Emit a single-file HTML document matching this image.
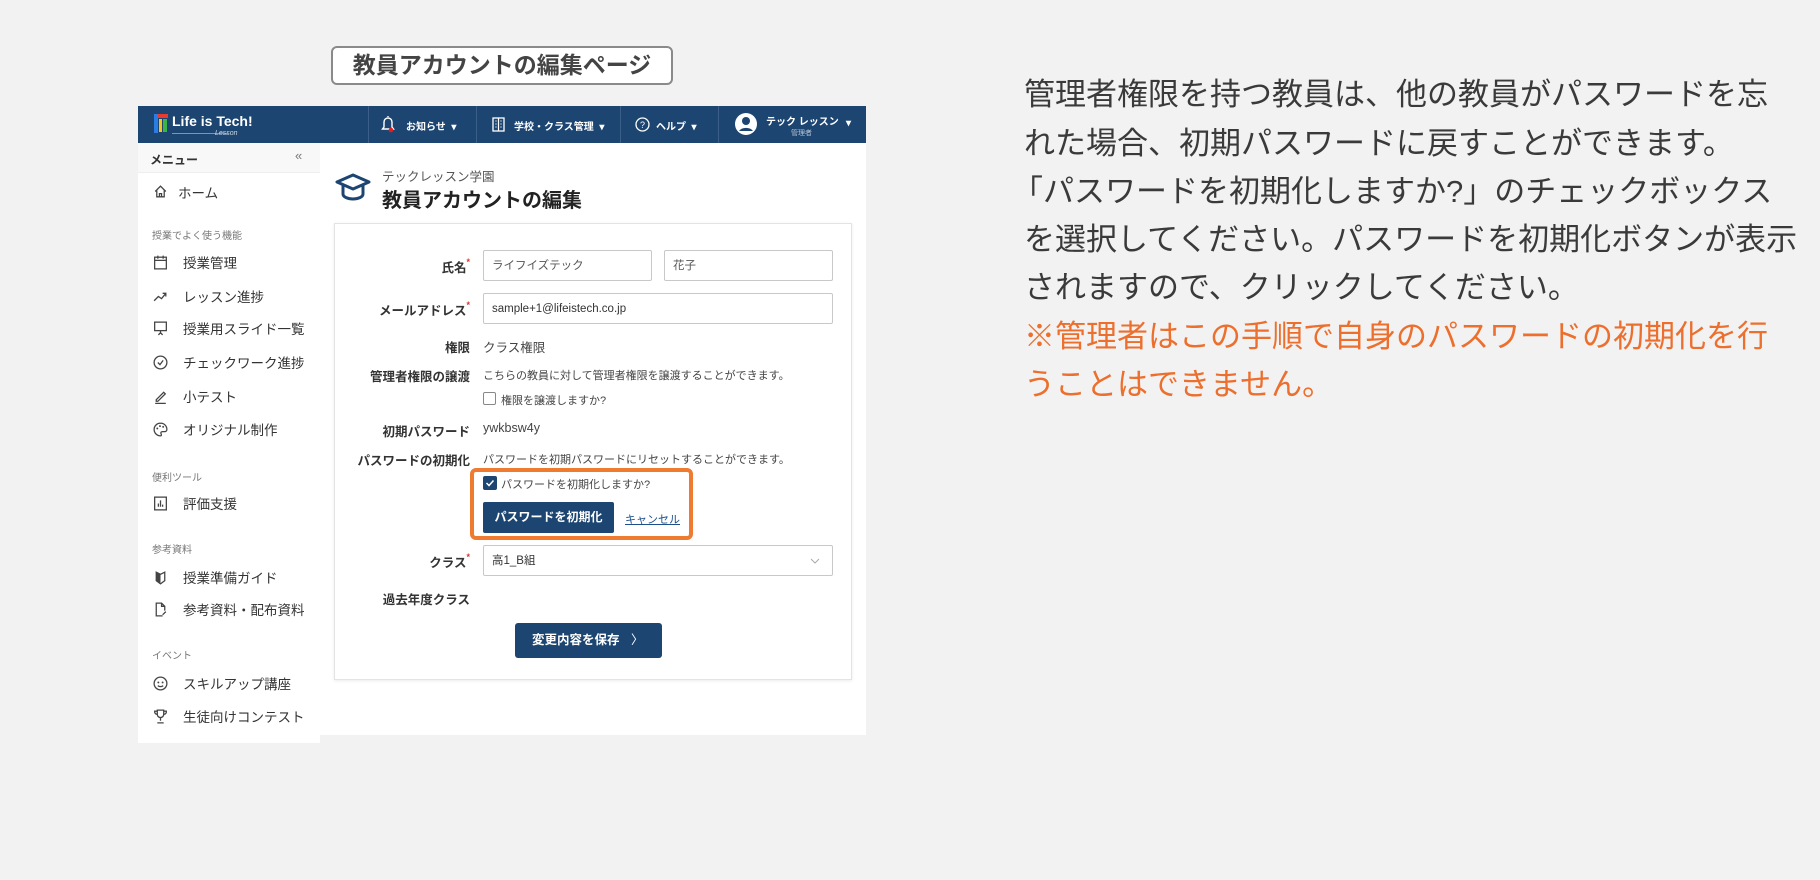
<!DOCTYPE html>
<html><head><meta charset="utf-8"><style>
*{box-sizing:border-box;margin:0;padding:0}
body{width:1820px;height:880px;background:#f2f2f2;font-family:"Liberation Sans","Noto Sans CJK JP",sans-serif;position:relative;overflow:hidden;color:#333}
.a{position:absolute;white-space:nowrap}
.title{left:331px;top:46px;width:342px;height:39px;border:2px solid #8a8a8a;border-radius:6px;background:#fff;font-size:23px;font-weight:bold;color:#444;text-align:center;line-height:35px}
.hdr{left:138px;top:106px;width:728px;height:37px;background:#1d4571}
.hdr .div{position:absolute;top:0;width:1px;height:37px;background:#3b5f88}
.ht{color:#fff;font-size:10px;font-weight:bold;position:absolute;top:12px}
.side{left:138px;top:143px;width:182px;height:600px;background:#fff}
.main{left:320px;top:143px;width:546px;height:592px;background:#fff}
.sm{font-size:13.5px;color:#333;position:absolute;left:45px}
.sec{font-size:10px;color:#777;position:absolute;left:14px}
.ic{position:absolute;left:14px;width:17px;height:17px}
.card{left:334px;top:223px;width:518px;height:457px;background:#fff;border:1px solid #e3e3e3;box-shadow:0 1px 3px rgba(0,0,0,.08)}
.lbl{font-size:12.5px;font-weight:bold;color:#333;text-align:right;width:200px;left:270px}
.req{color:#d33;font-size:9px;vertical-align:top}
.inp{border:1px solid #c8c8c8;border-radius:2px;background:#fff;font-size:11.5px;color:#555;padding-left:8px;line-height:30px;height:31px}
.tx{font-size:11px;color:#444}
.rt{left:1024px;font-size:31px;color:#3a3a3a;line-height:48px}
</style></head><body>
<div class="a title">教員アカウントの編集ページ</div>

<div class="a hdr">
  <svg style="position:absolute;left:16px;top:8px" width="14" height="19" viewBox="0 0 14 19"><rect x="0" y="0" width="4" height="19" fill="#2a7de1"/><rect x="4" y="0" width="10" height="4" fill="#e63b2e"/><rect x="5" y="5" width="3" height="13" fill="#f5c518"/><rect x="9" y="5" width="4" height="13" fill="#3cb44b"/></svg>
  <div class="a" style="left:34px;top:7px;color:#fff;font-size:14px;font-weight:bold">Life is Tech!</div>
  <div class="a" style="left:34px;top:27px;width:56px;height:1px;background:#7a95b5"></div>
  <div class="a" style="left:77px;top:24px;color:#cfd9e6;font-size:7px;font-style:italic">Lesson</div>
  <div class="div" style="left:230px"></div><div class="div" style="left:338px"></div><div class="div" style="left:482px"></div><div class="div" style="left:580px"></div>
  <svg style="position:absolute;left:243px;top:9px" width="14" height="19" viewBox="0 0 14 19"><path d="M7 1v1M3 12V7a4 4 0 0 1 8 0v5l1.5 2h-11z" fill="none" stroke="#fff" stroke-width="1.4"/><circle cx="10" cy="15" r="2.3" fill="#e02020"/></svg>
  <div class="ht" style="left:268px">お知らせ&nbsp; ▾</div>
  <svg style="position:absolute;left:354px;top:11px" width="13" height="15" viewBox="0 0 13 15"><rect x="1" y="1" width="11" height="13" fill="none" stroke="#fff" stroke-width="1.3"/><path d="M6.5 1v13M3.5 4h1M8.5 4h1M3.5 7h1M8.5 7h1M3.5 10h1M8.5 10h1" stroke="#fff" stroke-width="1.2"/></svg>
  <div class="ht" style="left:376px">学校・クラス管理&nbsp; ▾</div>
  <svg style="position:absolute;left:497px;top:11px" width="15" height="15" viewBox="0 0 15 15"><circle cx="7.5" cy="7.5" r="6.5" fill="none" stroke="#fff" stroke-width="1.3"/><text x="7.5" y="11" font-size="9" fill="#fff" text-anchor="middle" font-family="Liberation Sans">?</text></svg>
  <div class="ht" style="left:518px">ヘルプ&nbsp; ▾</div>
  <svg style="position:absolute;left:596px;top:6px" width="24" height="24" viewBox="0 0 24 24"><circle cx="12" cy="12" r="11" fill="#fff"/><circle cx="12" cy="9" r="4" fill="#1d4571"/><path d="M5 19a8 6 0 0 1 14 0" fill="#1d4571"/></svg>
  <div class="ht" style="left:628px;top:7px">テック レッスン</div>
  <div class="a" style="left:653px;top:22px;color:#b8c6d8;font-size:7px">管理者</div>
  <div class="ht" style="left:708px;top:12px">▾</div>
</div>

<div class="a side">
  <div style="position:absolute;left:0;top:0;width:182px;height:30px;background:#f8f8f8;border-bottom:1px solid #eee"></div>
  <div class="a" style="left:12px;top:8px;font-size:12px;font-weight:bold">メニュー</div>
  <div class="a" style="left:157px;top:5px;font-size:13px;color:#777">«</div>
  <svg class="ic" style="top:40px" viewBox="0 0 16 16"><path d="M3 8l5-5 5 5M4.5 7v6h7V7M7 13v-3h2v3" fill="none" stroke="#444" stroke-width="1.2"/></svg>
  <div class="sm" style="top:39px;left:40px">ホーム</div>
  <div class="sec" style="top:84px">授業でよく使う機能</div>
  <svg class="ic" style="top:111px" viewBox="0 0 16 16"><rect x="2.5" y="3" width="11" height="11" fill="none" stroke="#444" stroke-width="1.2"/><path d="M2.5 6h11M5.5 1.5v3M10.5 1.5v3" stroke="#444" stroke-width="1.2"/></svg>
  <div class="sm" style="top:109px">授業管理</div>
  <svg class="ic" style="top:145px" viewBox="0 0 16 16"><path d="M2 12l4-4 3 2 4-5M10 5h3v3" fill="none" stroke="#444" stroke-width="1.2"/></svg>
  <div class="sm" style="top:143px">レッスン進捗</div>
  <svg class="ic" style="top:177px" viewBox="0 0 16 16"><rect x="2.5" y="2" width="11" height="8" fill="none" stroke="#444" stroke-width="1.2"/><path d="M8 10v3M6 14l2-2 2 2" fill="none" stroke="#444" stroke-width="1.2"/></svg>
  <div class="sm" style="top:175px">授業用スライド一覧</div>
  <svg class="ic" style="top:211px" viewBox="0 0 16 16"><circle cx="8" cy="8" r="6" fill="none" stroke="#444" stroke-width="1.2"/><path d="M5.5 8l2 2 3-4" fill="none" stroke="#444" stroke-width="1.2"/></svg>
  <div class="sm" style="top:209px">チェックワーク進捗</div>
  <svg class="ic" style="top:245px" viewBox="0 0 16 16"><path d="M4 11l7-7 1.5 1.5-7 7H4zM3 14.5h10" fill="none" stroke="#444" stroke-width="1.2"/></svg>
  <div class="sm" style="top:243px">小テスト</div>
  <svg class="ic" style="top:278px" viewBox="0 0 16 16"><path d="M8 2a6 6 0 1 0 0 12c1 0 1-1 .5-2s0-2 1.5-2h2a2 2 0 0 0 2-2C14 4.5 11.3 2 8 2z" fill="none" stroke="#444" stroke-width="1.2"/><circle cx="5" cy="7" r=".9" fill="#444"/><circle cx="7.5" cy="4.8" r=".9" fill="#444"/><circle cx="10.5" cy="5.5" r=".9" fill="#444"/></svg>
  <div class="sm" style="top:276px">オリジナル制作</div>
  <div class="sec" style="top:326px">便利ツール</div>
  <svg class="ic" style="top:352px" viewBox="0 0 16 16"><rect x="2.5" y="2" width="11" height="12" fill="none" stroke="#444" stroke-width="1.2"/><path d="M6 11V8M8 11V5M10 11V9" stroke="#444" stroke-width="1.2"/></svg>
  <div class="sm" style="top:350px">評価支援</div>
  <div class="sec" style="top:398px">参考資料</div>
  <svg class="ic" style="top:426px" viewBox="0 0 16 16"><path d="M4 3l4 2 4-2v8l-4 3-4-3z" fill="none" stroke="#444" stroke-width="1.2"/><path d="M4 3l4 2v9l-4-3z" fill="#444"/></svg>
  <div class="sm" style="top:424px">授業準備ガイド</div>
  <svg class="ic" style="top:458px" viewBox="0 0 16 16"><path d="M10 14H4V2h5l3 3v4M9 2v3h3M10 13l3-3" fill="none" stroke="#444" stroke-width="1.2"/></svg>
  <div class="sm" style="top:456px">参考資料・配布資料</div>
  <div class="sec" style="top:504px">イベント</div>
  <svg class="ic" style="top:532px" viewBox="0 0 16 16"><circle cx="8" cy="8" r="6" fill="none" stroke="#444" stroke-width="1.2"/><circle cx="6" cy="7" r=".9" fill="#444"/><circle cx="10" cy="7" r=".9" fill="#444"/><path d="M5.5 10a3 2 0 0 0 5 0" fill="none" stroke="#444" stroke-width="1.2"/></svg>
  <div class="sm" style="top:530px">スキルアップ講座</div>
  <svg class="ic" style="top:565px" viewBox="0 0 16 16"><path d="M5 2h6v4a3 3 0 0 1-6 0zM5 3H2.5a2.5 2.5 0 0 0 2.5 3M11 3h2.5A2.5 2.5 0 0 1 11 6M8 9v3M5 14h6" fill="none" stroke="#444" stroke-width="1.2"/></svg>
  <div class="sm" style="top:563px">生徒向けコンテスト</div>
</div>

<div class="a main"></div>
<svg class="a" style="left:334px;top:172px" width="38" height="30" viewBox="0 0 38 30"><path d="M19 3L3 10l16 7 16-7z" fill="none" stroke="#1d4571" stroke-width="3" stroke-linejoin="round"/><path d="M9 13v9c0 3 5 5 10 5s10-2 10-5v-9" fill="none" stroke="#1d4571" stroke-width="3"/></svg>
<div class="a" style="left:382px;top:166px;font-size:12.5px;color:#555">テックレッスン学園</div>
<div class="a" style="left:382px;top:184px;font-size:20px;font-weight:bold;color:#222">教員アカウントの編集</div>

<div class="a card"></div>
<div class="a lbl" style="top:257px">氏名<span class="req">*</span></div>
<div class="a inp" style="left:483px;top:250px;width:169px">ライフイズテック</div>
<div class="a inp" style="left:664px;top:250px;width:169px">花子</div>
<div class="a lbl" style="top:300px">メールアドレス<span class="req">*</span></div>
<div class="a inp" style="left:483px;top:293px;width:350px;color:#333">sample+1@lifeistech.co.jp</div>
<div class="a lbl" style="top:337px">権限</div>
<div class="a" style="left:483px;top:337px;font-size:12.5px;color:#444">クラス権限</div>
<div class="a lbl" style="top:366px">管理者権限の譲渡</div>
<div class="a tx" style="left:483px;top:367px">こちらの教員に対して管理者権限を譲渡することができます。</div>
<div class="a" style="left:483px;top:392px;width:13px;height:13px;border:1px solid #888;border-radius:2px;background:#fff"></div>
<div class="a tx" style="left:501px;top:392px">権限を譲渡しますか?</div>
<div class="a lbl" style="top:421px">初期パスワード</div>
<div class="a" style="left:483px;top:421px;font-size:12.5px;color:#444">ywkbsw4y</div>
<div class="a lbl" style="top:450px">パスワードの初期化</div>
<div class="a tx" style="left:483px;top:451px">パスワードを初期パスワードにリセットすることができます。</div>
<div class="a" style="left:470px;top:468px;width:223px;height:72px;border:4px solid #ef7b31;border-radius:6px"></div>
<div class="a" style="left:483px;top:476px;width:14px;height:14px;border-radius:2px;background:#1d4571"></div>
<svg class="a" style="left:483px;top:476px" width="14" height="14" viewBox="0 0 14 14"><path d="M3.5 7l2.5 2.5 4.5-5" fill="none" stroke="#fff" stroke-width="1.5"/></svg>
<div class="a tx" style="left:501px;top:476px">パスワードを初期化しますか?</div>
<div class="a" style="left:483px;top:502px;width:131px;height:31px;background:#1d4571;border-radius:2px;color:#fff;font-size:12px;font-weight:bold;text-align:center;line-height:31px">パスワードを初期化</div>
<div class="a" style="left:625px;top:511px;font-size:11px;color:#1d4f8c;text-decoration:underline">キャンセル</div>
<div class="a lbl" style="top:552px">クラス<span class="req">*</span></div>
<div class="a inp" style="left:483px;top:545px;width:350px;color:#333">高1_B組</div>
<svg class="a" style="left:810px;top:557px" width="10" height="8" viewBox="0 0 10 8"><path d="M1 2l4 4 4-4" fill="none" stroke="#aaa" stroke-width="1"/></svg>
<div class="a lbl" style="top:589px">過去年度クラス</div>
<div class="a" style="left:515px;top:623px;width:147px;height:35px;background:#1d4571;border-radius:3px;color:#fff;font-size:12.5px;font-weight:bold;line-height:35px;padding-left:17px">変更内容を保存 <span style="margin-left:8px;font-weight:normal">〉</span></div>

<div class="a rt" style="top:71px">管理者権限を持つ教員は、他の教員がパスワードを忘</div>
<div class="a rt" style="top:120px">れた場合、初期パスワードに戻すことができます。</div>
<div class="a rt" style="top:168px;left:1012px">「パスワードを初期化しますか?」のチェックボックス</div>
<div class="a rt" style="top:216px">を選択してください。パスワードを初期化ボタンが表示</div>
<div class="a rt" style="top:264px">されますので、クリックしてください。</div>
<div class="a rt" style="top:313px;color:#ec6f2d">※管理者はこの手順で自身のパスワードの初期化を行</div>
<div class="a rt" style="top:361px;color:#ec6f2d">うことはできません。</div>
</body></html>
